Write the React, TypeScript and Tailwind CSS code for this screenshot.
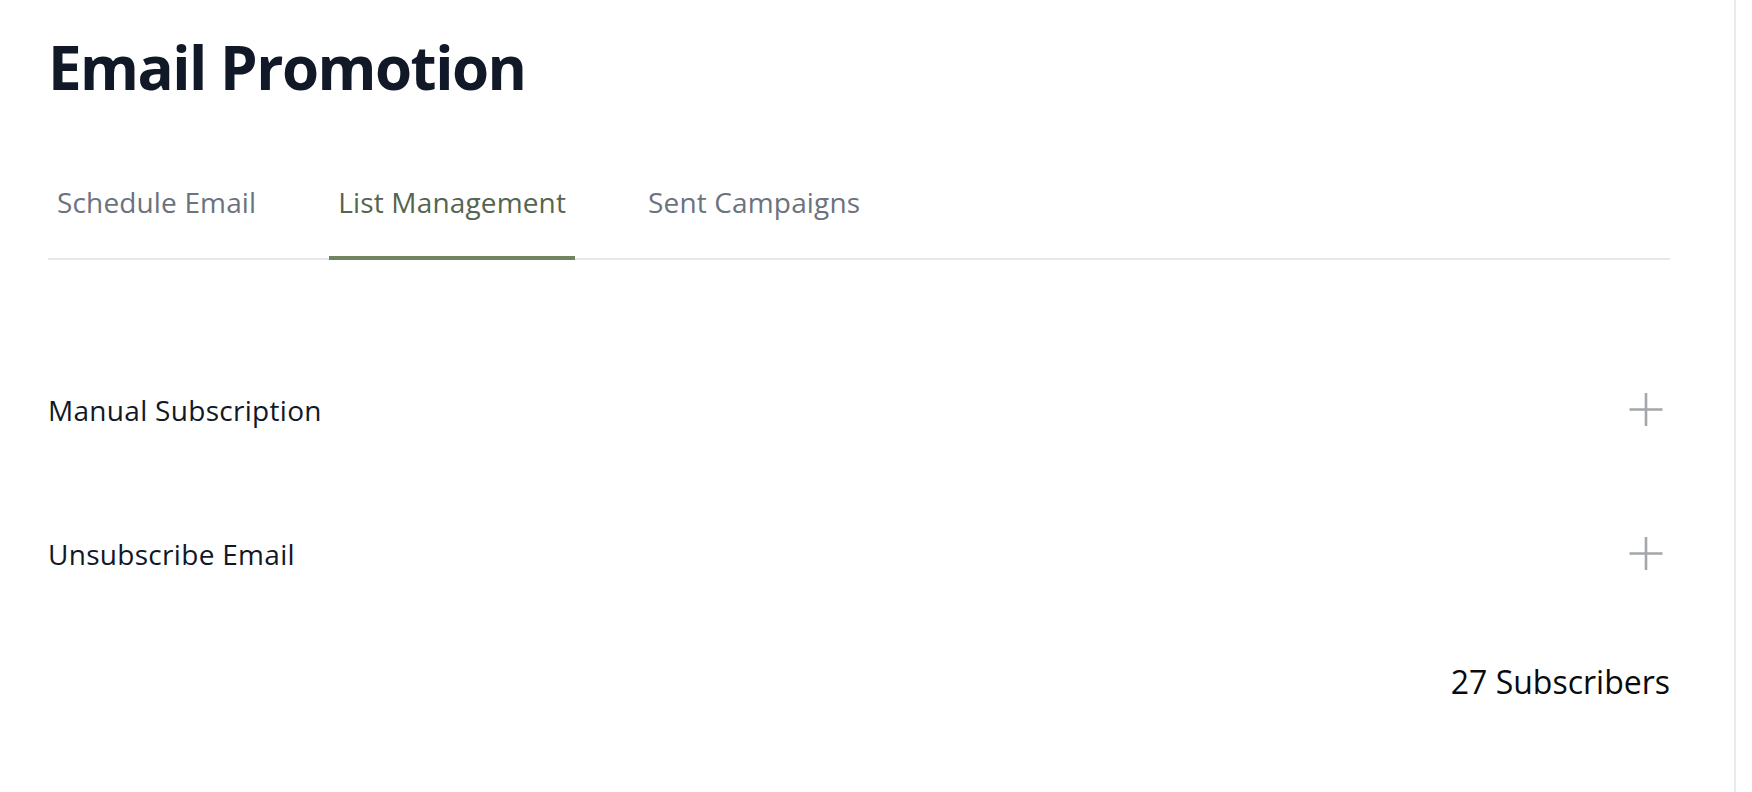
import React from "react";

function PlusIcon() {
  return (
    <svg width="48" height="48" viewBox="0 0 48 48" fill="none" className="shrink-0">
      <path d="M7.5 23.5H40.5M24 7V40" stroke="#a3a6ab" strokeWidth="2.6" />
    </svg>
  );
}

export default function App() {
  const font = { fontFamily: '"Open Sans", "Noto Sans", sans-serif' };
  return (
    <div className="flex h-[792px] w-full bg-white" style={font}>
      <div className="w-[1736px] shrink-0 border-r-2 border-[#e8e9eb] pl-12 pr-16">
        <h1 className="pt-[31px] text-[60px] font-bold leading-[72px] tracking-[-1.5px] text-[#111827]">
          Email Promotion
        </h1>

        <div className="mt-[79px] flex gap-16 border-b-2 border-[#e5e7eb]">
          <button className="px-[9px] pb-[36px] text-[28px] leading-[40px] tracking-[0.15px] text-[#6b7280]">
            Schedule Email
          </button>
          <button className="-mb-[2px] border-b-[4px] border-[#718360] px-[9px] pb-[34px] text-[28px] leading-[40px] tracking-[0.15px] text-[#566450]">
            List Management
          </button>
          <button className="px-[9px] pb-[36px] text-[28px] leading-[40px] tracking-[0.15px] text-[#6b7280]">
            Sent Campaigns
          </button>
        </div>

        <div className="mt-[78px]">
          <div className="flex h-[144px] items-center justify-between">
            <span className="text-[28px] leading-[40px] tracking-[0.3px] text-[#111827]">Manual Subscription</span>
            <PlusIcon />
          </div>
          <div className="flex h-[144px] items-center justify-between">
            <span className="text-[28px] leading-[40px] tracking-[0.3px] text-[#111827]">Unsubscribe Email</span>
            <PlusIcon />
          </div>
          <div className="mt-[32px] text-right text-[32px] leading-[48px] text-[#0b0b0b]">
            27 Subscribers
          </div>
        </div>
      </div>
      <div className="flex-1" />
    </div>
  );
}
